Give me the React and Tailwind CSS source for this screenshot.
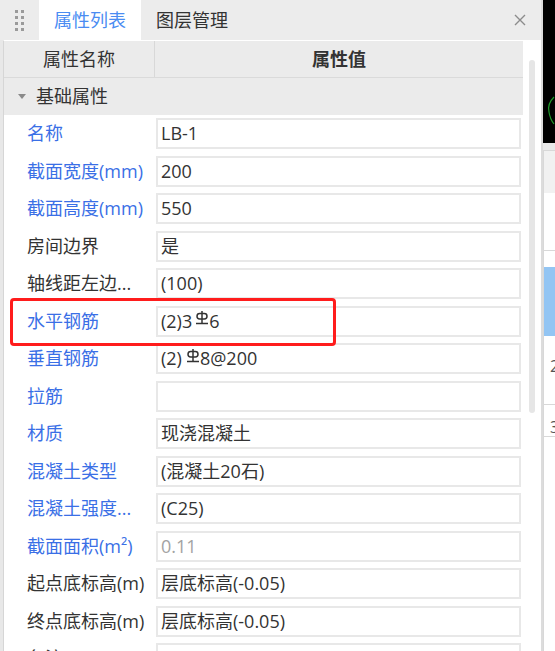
import React from 'react';

// 属性行：label 文本、颜色、值
const rows = [
  { label: '名称', blue: true, value: 'LB-1' },
  { label: '截面宽度(mm)', blue: true, value: '200' },
  { label: '截面高度(mm)', blue: true, value: '550' },
  { label: '房间边界', blue: false, value: '是' },
  { label: '轴线距左边...', blue: false, value: '(100)' },
  { label: '水平钢筋', blue: true, value: 'h' },
  { label: '垂直钢筋', blue: true, value: 'v' },
  { label: '拉筋', blue: true, value: '' },
  { label: '材质', blue: true, value: '现浇混凝土' },
  { label: '混凝土类型', blue: true, value: '(混凝土20石)' },
  { label: '混凝土强度...', blue: true, value: '(C25)' },
  { label: '截面面积(m²)', blue: true, value: '0.11', muted: true },
  { label: '起点底标高(m)', blue: false, value: '层底标高(-0.05)' },
  { label: '终点底标高(m)', blue: false, value: '层底标高(-0.05)' },
  { label: '备注', blue: false, value: '' },
];

// 三级钢筋符号
function Rebar() {
  return (
    <svg width="12" height="14" viewBox="0 0 12 14" className="mx-[1px] -translate-y-[3px]">
      <line x1="6" y1="0" x2="6" y2="12" stroke="#333" strokeWidth="1.5" />
      <rect x="1" y="2.5" width="10" height="5.5" rx="2.7" fill="none" stroke="#333" strokeWidth="1.5" />
      <line x1="0" y1="12.5" x2="12" y2="12.5" stroke="#333" strokeWidth="1.5" />
    </svg>
  );
}

function Value({ row }) {
  if (row.value === 'h') {
    return (
      <span className="flex items-center">(2)3<span className="w-[3px]" /><Rebar />6</span>
    );
  }
  if (row.value === 'v') {
    return (
      <span className="flex items-center">(2)<span className="w-[4px]" /><Rebar />8@200</span>
    );
  }
  return <span className={row.muted ? 'text-[#a3a3a3]' : ''}>{row.value}</span>;
}

function TabBar() {
  return (
    <div className="flex h-[40px] shrink-0 items-center bg-[#ececec]">
      <div className="flex w-[39px] justify-center">
        <div className="grid grid-cols-2 gap-x-[3px] gap-y-[3px]">
          {[0, 1, 2, 3, 4, 5, 6, 7].map(i => (
            <span key={i} className="h-[3px] w-[3px] bg-[#9a9a9a]" />
          ))}
        </div>
      </div>
      <div className="flex h-full w-[102px] items-center justify-center bg-white text-[#4a8cf2]">属性列表</div>
      <div className="pl-[15px] text-[#333]">图层管理</div>
      <svg width="12" height="12" viewBox="0 0 12 12" className="ml-auto mr-[15px]">
        <path d="M1 1 L11 11 M11 1 L1 11" stroke="#8c8c8c" strokeWidth="1.4" />
      </svg>
    </div>
  );
}

function RightStrip() {
  return (
    <div className="flex w-[12px] flex-col bg-[#e9e9e9]">
      <div className="h-[143px] shrink-0 bg-black">
        <svg width="12" height="143" viewBox="0 0 12 143">
          <path d="M11 97 Q4 104 6 112 Q7 119 11 124" fill="none" stroke="#1f9a2a" strokeWidth="1.2" />
        </svg>
      </div>
      <div className="h-[7px] shrink-0" />
      <div className="h-[43px] shrink-0 border-l border-t border-[#d8d8d8] bg-[#f1f1f1]" />
      <div className="h-[57px] shrink-0 border-l border-[#d8d8d8] bg-white" />
      <div className="h-px shrink-0 bg-[#d8d8d8]" />
      <div className="h-[16px] shrink-0 border-l border-[#d8d8d8] bg-white" />
      <div className="h-[69px] shrink-0 border-l border-[#d8d8d8] bg-[#93c5f3]" />
      <div className="h-[68px] shrink-0 overflow-hidden border-l border-[#d8d8d8] bg-white pl-[6px] pt-[22px] text-[16px] leading-none text-[#555]">2</div>
      <div className="h-px shrink-0 bg-[#d8d8d8]" />
      <div className="h-[31px] shrink-0 overflow-hidden border-l border-[#d8d8d8] bg-white pl-[6px] pt-[14px] text-[16px] leading-none text-[#555]">3</div>
      <div className="h-px shrink-0 bg-[#d8d8d8]" />
      <div className="flex-1 border-l border-[#d8d8d8] bg-white" />
    </div>
  );
}

export default function App() {
  return (
    <div
      className="relative flex h-[651px] w-[555px] overflow-hidden bg-[#e9e9e9] text-[18px] text-[#333]"
      style={{ fontFamily: '"Open Sans", "Noto Sans CJK SC", sans-serif' }}
    >
      <div className="flex w-[541px] flex-col bg-[#e8e8e8]">
        <TabBar />
        <div className="ml-[3px] flex min-h-0 flex-1 overflow-hidden border-l border-t border-l-[#d6d6d6] border-t-white bg-white">
          <div className="flex w-[519px] flex-col">
            {/* 表头 */}
            <div className="flex h-[37px] shrink-0 border-b border-[#dadada] bg-[#ebebeb]">
              <div className="flex w-[151px] items-center justify-center border-r border-[#d8d8d8]">属性名称</div>
              <div className="flex flex-1 items-center justify-center font-semibold">属性值</div>
            </div>
            {/* 分组 */}
            <div className="flex h-[37px] shrink-0 items-center bg-[#ebebeb]">
              <svg width="8" height="5" viewBox="0 0 8 5" className="ml-[14px] mr-[10px]">
                <path d="M0 0 L8 0 L4 5 Z" fill="#8a8a8a" />
              </svg>
              <span>基础属性</span>
            </div>
            {rows.map(row => (
              <div key={row.label} className="flex h-[37.5px] shrink-0 items-center">
                <div className={`w-[152px] whitespace-nowrap pl-[23px] ${row.blue ? 'text-[#3a6fe6]' : 'text-[#333]'}`}>{row.label}</div>
                <div className="flex h-[31px] w-[365px] items-center border-2 border-[#e8e8e8] bg-white pl-[3px]">
                  <Value row={row} />
                </div>
              </div>
            ))}
          </div>
          {/* 滚动条 */}
          <div className="w-[18px] pt-[19px] pl-[6px]">
            <div className="h-[353px] w-[6px] rounded-full bg-[#e6e6e6]" />
          </div>
        </div>
      </div>
      <div className="w-[2px] bg-[#dcdcdc]" />
      <RightStrip />
      {/* 红色标注框 */}
      <div className="absolute left-[10px] top-[298px] h-[48px] w-[326px] rounded-[4px] border-[3px] border-[#ff1c1c]" />
    </div>
  );
}
